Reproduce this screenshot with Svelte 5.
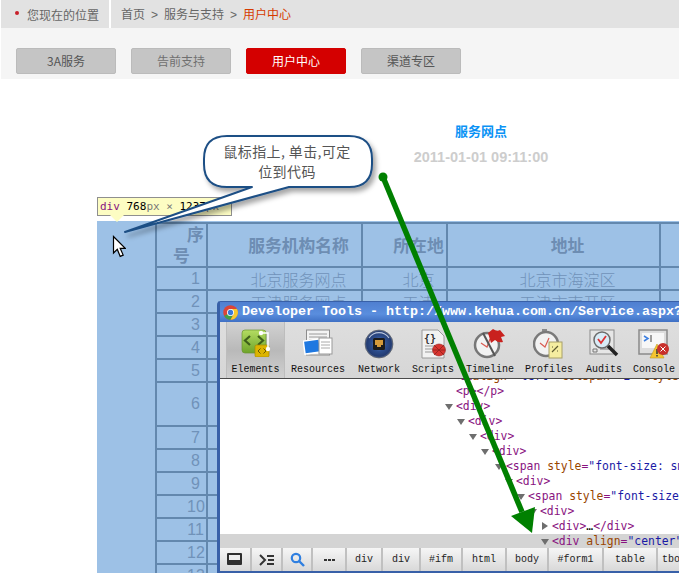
<script>
  const tabs = [
    { label: '3A服务' },
    { label: '告前支持', muted: true },
    { label: '用户中心', active: true },
    { label: '渠道专区' }
  ];
  const rows = [
    { n: 1, name: '北京服务网点', city: '北京', addr: '北京市海淀区' },
    { n: 2, name: '天津服务网点', city: '天津', addr: '天津市南开区' },
    { n: 3 }, { n: 4 }, { n: 5 }, { n: 6, tall: true }, { n: 7 }, { n: 8 }, { n: 9 },
    { n: 10 }, { n: 11 }, { n: 12 }, { n: 13 }
  ];
  const dom = [
    { at: 456, tri: 0, html: [['t', '<p></p>']] },
    { at: 456, tri: 1, html: [['t', '<div>']] },
    { at: 468, tri: 1, html: [['t', '<div>']] },
    { at: 480, tri: 1, html: [['t', '<div>']] },
    { at: 492, tri: 1, html: [['t', '<div>']] },
    { at: 506, tri: 1, html: [['t', '<span '], ['a', 'style'], ['t', '='], ['v', '"font-size: small"']] },
    { at: 516, tri: 1, html: [['t', '<div>']] },
    { at: 528, tri: 1, html: [['t', '<span '], ['a', 'style'], ['t', '='], ['v', '"font-size: small"']] },
    { at: 540, tri: 1, html: [['t', '<div>']] },
    { at: 552, tri: 2, html: [['t', '<div>'], ['x', '…'], ['t', '</div>']] },
    { at: 552, tri: 1, sel: true, html: [['t', '<div '], ['a', 'align'], ['t', '='], ['v', '"center"']] }
  ];
  const crumbs = [
    { w: 32, label: 'dock' }, { w: 31, label: 'con' }, { w: 30, label: 'find' }, { w: 34, t: '•••' },
    { w: 36, t: 'div' }, { w: 38, t: 'div' }, { w: 42, t: '#ifm' }, { w: 44, t: 'html' },
    { w: 42, t: 'body' }, { w: 55, t: '#form1' }, { w: 54, t: 'table' }, { w: 40, t: 'tbody' }
  ];
</script>

<div class="page">
  <div class="crumbbar">
    <div class="here"><i class="dot"></i>您现在的位置</div>
    <div class="path">首页<b>&gt;</b>服务与支持<b>&gt;</b><em>用户中心</em></div>
  </div>

  <nav class="tabs">
    {#each tabs as t}
      <span class="tab" class:active={t.active} class:muted={t.muted}>{t.label}</span>
    {/each}
  </nav>

  <main class="content">
    <h1>服务网点</h1>
    <p class="date">2011-01-01 09:11:00</p>
    <div class="hl">
      <table>
        <colgroup><col class="c1" /><col class="c2" /><col class="c3" /><col class="c4" /><col class="c5" /></colgroup>
        <thead>
          <tr><th>序号</th><th>服务机构名称</th><th>所在地</th><th>地址</th><th></th></tr>
        </thead>
        <tbody>
          {#each rows as r}
            <tr class:tall={r.tall}>
              <td>{r.n}</td><td>{r.name ?? ''}</td><td>{r.city ?? ''}</td><td>{r.addr ?? ''}</td><td></td>
            </tr>
          {/each}
        </tbody>
      </table>
    </div>
  </main>

  <div class="tip">
    <span class="tg">div</span> 768<span class="px">px</span> <span class="px">×</span> 1237<span class="px">px</span>
    <i class="tipdown"></i>
  </div>

  <svg class="cursor" width="14" height="24" viewBox="0 0 14 24">
    <path d="M1.500 1.500V18l3.800-3.600 2.900 7 3-1.300-3-6.800h5z" fill="#fff" stroke="#000" stroke-width="1.200" />
  </svg>

  <section class="devtools">
    <header class="dt-title">
      <svg width="15" height="15" viewBox="0 0 30 30">
        <circle cx="15" cy="15" r="14.500" fill="#db4437" />
        <path d="M15 15 2.400 22.200A14.500 14.500 0 0 0 15 29.500L22 16z" fill="#3ea14a" />
        <path d="M15 8h13a14.500 14.500 0 0 1-13 21.500L22 17z" fill="#f6c92d" />
        <circle cx="15" cy="15" r="7" fill="#fff" />
        <circle cx="15" cy="15" r="5.300" fill="#3b78d8" />
      </svg>
      <span>Developer Tools - http://www.kehua.com.cn/Service.aspx?</span>
    </header>

    <div class="dt-tools">
      <div class="tool sel" style="width:59px">
        <svg width="30" height="28" viewBox="0 0 30 28">
          <defs><linearGradient id="gr" x1="0" y1="0" x2="0" y2="1"><stop offset="0" stop-color="#b4dd62" /><stop offset="1" stop-color="#6ea32a" /></linearGradient></defs>
          <rect x="1" y="1" width="24" height="23" rx="3" fill="url(#gr)" stroke="#6c9530" stroke-width=".7" />
          <path d="M9 7 4 11.500 9 16M17 7l5 4.500-5 4.500" fill="none" stroke="#3f5f1b" stroke-width="2.200" />
          <rect x="14" y="16" width="14" height="12" rx="1.500" fill="#dcb400" stroke="#a88a00" stroke-width=".7" />
          <path d="M19.500 19.500 17 22l2.500 2.500M22.500 19.500 25 22l-2.500 2.500" fill="none" stroke="#6b5800" stroke-width="1" />
          <path d="M20 4h7v16" fill="none" stroke="#fff" stroke-width="1.500" />
          <circle cx="20" cy="4" r="2.200" fill="#fff" /><circle cx="27" cy="20" r="2.200" fill="#fff" />
        </svg>
        <span>Elements</span>
      </div>
      <div class="tool" style="width:66px">
        <svg width="30" height="28" viewBox="0 0 30 28">
          <rect x="3.500" y="1" width="23" height="25" fill="#f3f3f3" stroke="#8c8c8c" />
          <path d="M6 5h18M6 8h18M6 11h10" stroke="#9a9a9a" />
          <rect x="1" y="11" width="16" height="13" transform="rotate(-8 9 17)" fill="#1f78e0" stroke="#fff" stroke-width="1.500" />
          <rect x="16" y="9" width="13" height="16" fill="#fff" stroke="#999" />
          <path d="M18 13h9M18 16h9M18 19h9" stroke="#aaa" />
        </svg>
        <span>Resources</span>
      </div>
      <div class="tool" style="width:56px">
        <svg width="30" height="30" viewBox="0 0 30 30">
          <defs><radialGradient id="nw" cx=".5" cy=".5" r=".55"><stop offset="0" stop-color="#c7d6ec" /><stop offset=".45" stop-color="#2d4f90" /><stop offset=".8" stop-color="#243c72" /><stop offset="1" stop-color="#8f9fb8" /></radialGradient></defs>
          <circle cx="15" cy="15" r="14" fill="url(#nw)" stroke="#555" stroke-width=".6" />
          <rect x="9" y="9" width="12" height="12" rx="1.500" fill="#1b1b1b" />
          <path d="M11 11h8v5h-2v2h-4v-2h-2z" fill="#d49a3a" />
          <path d="M5 9a12 12 0 0 1 20 0" fill="none" stroke="#dfe8f6" stroke-width="1.200" opacity=".8" />
        </svg>
        <span>Network</span>
      </div>
      <div class="tool" style="width:52px">
        <svg width="30" height="30" viewBox="0 0 30 30">
          <path d="M4 1h16l6 6v22H4z" fill="#f2f2f2" stroke="#9a9a9a" />
          <text class="brace" x="6" y="13">{'{}'}</text>
          <path d="M7 17h9M7 20h8M7 23h11" stroke="#999" />
          <ellipse cx="21" cy="21" rx="6.500" ry="6" fill="#d8342f" stroke="#8f1f1c" stroke-width=".6" />
          <path d="M16 16l10 10M26 16 16 26M15 21h12" stroke="#8f1f1c" stroke-width=".8" />
        </svg>
        <span>Scripts</span>
      </div>
      <div class="tool" style="width:62px">
        <svg width="34" height="30" viewBox="0 0 34 30">
          <circle cx="14" cy="16" r="12" fill="#f2f2f2" stroke="#777" stroke-width="2.500" />
          <path d="M8 14l6 4 3-8" fill="none" stroke="#d95b52" stroke-width="1.200" />
          <path d="M10 4l12 23" stroke="#555" stroke-width="2" />
          <path d="M15 4 20 0q4 3 7 1l5 6-4 1 2 5q-5 1-8-2l-4 3z" fill="#c9211e" />
        </svg>
        <span>Timeline</span>
      </div>
      <div class="tool" style="width:56px">
        <svg width="32" height="30" viewBox="0 0 32 30">
          <rect x="9" y="0" width="5" height="3" fill="#8a8a8a" />
          <circle cx="13" cy="15" r="12" fill="#f2f2f2" stroke="#7a7a7a" stroke-width="2.500" />
          <path d="M7 14l5 4 4-9" fill="none" stroke="#d95b52" stroke-width="1.200" />
          <rect x="16" y="13" width="13" height="16" fill="#f5eda0" stroke="#a8a068" />
          <path d="M19 23l6-6M19 18h1M24 22h1" stroke="#5d5a30" stroke-width="1.200" />
        </svg>
        <span>Profiles</span>
      </div>
      <div class="tool" style="width:54px">
        <svg width="30" height="30" viewBox="0 0 30 30">
          <rect x="1" y="1" width="24" height="24" fill="#e6e6e6" stroke="#8a8a8a" />
          <path d="M4 20h4v3H4zM11 20h9" fill="none" stroke="#777" />
          <circle cx="13" cy="11" r="8" fill="#d9ecf7" stroke="#6b6b6b" stroke-width="1.500" />
          <path d="M9 10l3 4 5-7" fill="none" stroke="#d33" stroke-width="1.800" />
          <path d="M19 17l9 9" stroke="#222" stroke-width="3.500" />
        </svg>
        <span>Audits</span>
      </div>
      <div class="tool" style="width:46px">
        <svg width="32" height="30" viewBox="0 0 32 30">
          <rect x="1" y="1" width="28" height="24" fill="#ddd" stroke="#8a8a8a" stroke-width="1.500" />
          <rect x="4" y="4" width="22" height="15" fill="#f7f7f7" />
          <path d="M6 7l4 2.500L6 12" fill="none" stroke="#3d7fe0" stroke-width="1.500" />
          <path d="M13 6v7" stroke="#444" />
          <path d="M12 29 19 15l7 14z" fill="#f4c430" stroke="#c09a20" stroke-width=".6" />
          <path d="M19 20v5M19 26v1.500" stroke="#333" stroke-width="1.500" />
          <circle cx="25" cy="20" r="6" fill="#c8302c" />
          <path d="M22.500 17.500l5 5M27.500 17.500l-5 5" stroke="#fff" />
        </svg>
        <span>Console</span>
      </div>
    </div>

    <div class="dt-dom">
      <div class="row cut"><span class="t">&lt;td </span><span class="a">align</span><span class="t">=</span><span class="v">"left"</span> <span class="a">colspan</span><span class="t">=</span><span class="v">"2"</span> <span class="a">style</span><span class="t">=</span><span class="v">"line</span></div>
      {#each dom as d}
        <div class="row" class:on={d.sel} style={`padding-left:${d.at - 220}px`}>{#if d.tri}<i class="tri" class:right={d.tri === 2}></i>{/if}{#each d.html as [k, s]}<span class={k}>{s}</span>{/each}</div>
      {/each}
    </div>

    <footer class="dt-crumbs">
      {#each crumbs as c}
        <span class="crumb" style={`width:${c.w}px`}>
          {#if c.label === 'dock'}
            <svg width="16" height="13" viewBox="0 0 16 13"><rect width="15" height="12" rx="1" fill="#2f2f2f" /><rect x="2" y="2" width="11" height="5" fill="#eee" /></svg>
          {:else if c.label === 'con'}
            <svg width="16" height="12" viewBox="0 0 16 12"><path d="M1 1l5 5-5 5" fill="none" stroke="#333" stroke-width="2" /><path d="M8 2h7M9 6h6M8 10h7" stroke="#333" stroke-width="2" /></svg>
          {:else if c.label === 'find'}
            <svg width="15" height="15" viewBox="0 0 15 15"><circle cx="6" cy="6" r="4.200" fill="none" stroke="#2f7fe0" stroke-width="2.200" /><path d="M9 9l5 5" stroke="#2f7fe0" stroke-width="2.400" /></svg>
          {:else if c.t === '•••'}
            <i class="dots"></i>
          {:else}
            {c.t}
          {/if}
        </span>
      {/each}
    </footer>
  </section>

  <svg class="marks" width="679" height="573" viewBox="0 0 679 573">
    <defs>
      <filter id="sh" x="-10%" y="-10%" width="125%" height="130%"><feDropShadow dx="3" dy="4" stdDeviation="2.500" flood-color="#000" flood-opacity=".35" /></filter>
    </defs>
    <path d="M227 136h122q23 0 23 23v5q0 23-23 23h-60L125 232l127-45h-25q-23 0-23-23v-5q0-23 23-23z" fill="#fff" stroke="#1f4f85" stroke-width="2" stroke-linejoin="round" filter="url(#sh)" />
    <circle cx="383" cy="177" r="4.500" fill="#008000" />
    <path d="M383 177 522 512" stroke="#008000" stroke-width="5.500" />
    <path d="M511 516 535 507 532 533z" fill="#008000" />
  </svg>
  <div class="bubble">鼠标指上, 单击,可定<br />位到代码</div>
</div>

<style>
  :global(body) { margin: 0; background: #fff; }
  .page {
    position: relative;
    width: 679px;
    height: 573px;
    overflow: hidden;
    background: #fff;
    font-family: "Noto Sans CJK SC", "Liberation Sans", sans-serif;
    font-size: 12px;
  }
  .crumbbar { display: flex; height: 28px; padding-left: 1px; gap: 2px; color: #666; line-height: 27px; }
  .here { width: 108px; background: #e2e2e2; display: flex; align-items: center; box-sizing: border-box; padding-left: 26px; position: relative; }
  .dot { position: absolute; left: 14px; top: 11px; width: 4px; height: 4px; border-radius: 50%; background: #c8202a; }
  .path { flex: 1; background: #e2e2e2; padding-left: 10px; }
  .path b { font-weight: 400; margin: 0 6px; font-family: "Liberation Sans", sans-serif; }
  .path em { font-style: normal; color: #d63a00; }
  .tabs { height: 51px; margin-left: 1px; background: #f5f5f5; box-sizing: border-box; padding: 20px 0 0 15px; display: flex; gap: 15px; align-items: flex-start; }
  .tab { width: 100px; height: 26px; box-sizing: border-box; background: #c5c5c5; border: 1px solid #bbb; border-radius: 2px; text-align: center; line-height: 24px; color: #555; }
  .tab.muted { color: #707070; }
  .tab.active { background: #d40000; border-color: #d40000; color: #fff; }

  .content { margin-left: 97px; width: 768px; text-align: center; }
  h1 { margin: 0; padding-top: 43px; font-size: 13px; line-height: 18px; font-weight: 700; color: #0b93f5; }
  .date { margin: 0; padding-top: 5px; font: 700 14.5px/24px "Liberation Sans", sans-serif; color: #cdcdcd; }
  .hl { margin-top: 52px; height: 400px; background: #9dc1e6; padding: 1px 0 0 58px; overflow: hidden; }
  table { table-layout: fixed; width: 710px; border-collapse: collapse; color: #7092b9; font-size: 16px; }
  .c1 { width: 51px; } .c2 { width: 155px; } .c3 { width: 85px; } .c4 { width: 213px; } .c5 { width: 206px; }
  th, td { border: 2px solid #6388ae; padding: 0 2px; text-align: center; text-indent: 28px; font-family: "Noto Sans CJK SC", sans-serif; overflow: hidden; }
  th { height: 42px; font-size: 16.8px; font-weight: 700; color: #6d8db3; line-height: 21px; padding: 0; }
  td { height: 21px; line-height: 20px; font-weight: 300; white-space: nowrap; }
  td:first-child { font-family: "Liberation Sans", sans-serif; font-weight: 400; }
  tr.tall td { height: 42px; }

  .tip { position: absolute; left: 97px; top: 197px; width: 135px; height: 19px; box-sizing: border-box; background: #fdfdc3; border: 1px solid #8f8f8f; font: 11px/18px "DejaVu Sans Mono", monospace; padding-left: 2px; color: #000; white-space: nowrap; }
  .tg { color: #881280; }
  .px { color: #777; }
  .tipdown { position: absolute; left: 12px; top: 17px; width: 0; height: 0; border: 7px solid transparent; border-top: 7px solid #fdfdc3; }
  .cursor { position: absolute; left: 112px; top: 235px; }

  .bubble { position: absolute; left: 203px; top: 141px; width: 168px; text-align: center; color: #555; font-size: 14px; letter-spacing: .4px; line-height: 20px; }
  .marks { position: absolute; left: 0; top: 0; pointer-events: none; }

  .devtools { position: absolute; left: 217px; top: 301px; width: 480px; height: 272px; box-sizing: border-box; display: flex; flex-direction: column; border: solid #3860a8; border-width: 1px 0 2px 3px; border-radius: 4px 0 0 0; background: #3f6fc4; }
  .dt-title { height: 20px; flex: none; display: flex; align-items: center; gap: 4px; padding-left: 3px; background: linear-gradient(#4f7fd0, #5a8ede 60%, #3f70c4); color: #fff; font: 700 13.33px/20px "Liberation Mono", monospace; white-space: nowrap; }
  .dt-tools { height: 57px; flex: none; box-sizing: border-box; display: flex; padding-left: 6px; background: linear-gradient(#dedede, #d6d6d6); border-bottom: 1px solid #4a4a4a; }
  .tool { display: flex; flex-direction: column; align-items: center; flex: none; font: 10px/14px "Liberation Mono", monospace; color: #111; box-sizing: border-box; padding: 7px 0 1px; height: 56px; }
  .tool svg { flex: none; }
  .tool span { margin-top: auto; }
  .tool.sel { background: linear-gradient(#d2d2d2, #b9b9b9 50%, #d0d0d0); border: solid #bdbdbd; border-width: 0 1px; }
  .brace { font: 700 10px "DejaVu Sans Mono", monospace; fill: #333; }
  .dt-dom { flex: 1; min-height: 0; background: #fff; overflow: hidden; font: 11.4px/15px "DejaVu Sans Mono", monospace; position: relative; }
  .row { height: 15px; position: relative; white-space: pre; }
  .row.cut { margin-top: -10px; padding-left: 232px; }
  .row.on { background: #d4d4d4; }
  .tri { position: absolute; margin-left: -11px; top: 5px; width: 0; height: 0; border: 4px solid transparent; border-top: 6px solid #6e6e6e; border-bottom: 0; }
  .tri.right { top: 3px; border: 4px solid transparent; border-left: 6px solid #6e6e6e; border-right: 0; margin-left: -10px; }
  .t { color: #881280; }
  .a { color: #994500; }
  .v { color: #1a1aa6; }
  .x { color: #000; }
  .dt-crumbs { height: 23px; flex: none; box-sizing: border-box; display: flex; background: linear-gradient(#f6f6f6, #d8d8d8); font: 10px/22px "Liberation Mono", monospace; color: #222; white-space: nowrap; }
  .crumb { flex: none; box-sizing: border-box; border-right: 2px solid #c0c0c0; display: flex; align-items: center; justify-content: center; overflow: hidden; }
  .dots { width: 11px; height: 2px; background: repeating-linear-gradient(90deg, #333 0 3px, transparent 3px 4px); }
</style>
